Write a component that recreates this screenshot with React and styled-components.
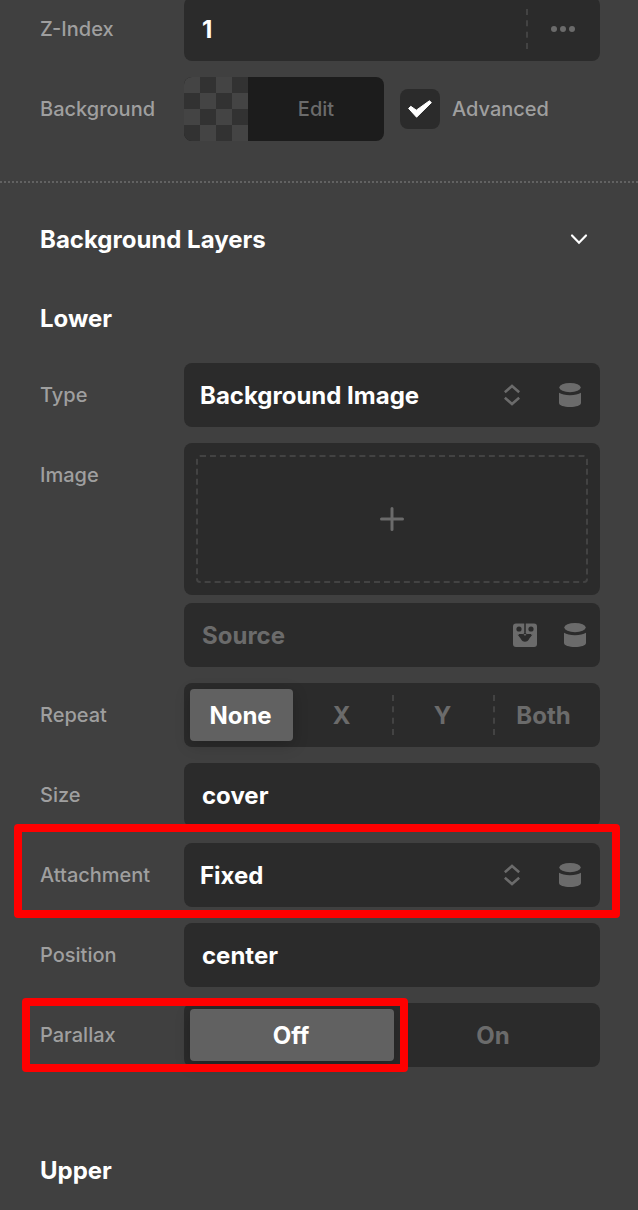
import React, { useState } from 'react';
import styled, { createGlobalStyle, css } from 'styled-components';

const GlobalStyle = createGlobalStyle`
  *, *::before, *::after {
    box-sizing: border-box;
  }

  body {
    margin: 0;
    background: #404040;
    overflow: hidden;
    font-family: Inter, "Liberation Sans", sans-serif;
    color: #fff;
  }

  button, input, select {
    font: inherit;
    color: inherit;
    margin: 0;
    padding: 0;
    border: 0;
    background: none;
  }
`;

const Panel = styled.main`
  display: flex;
  flex-direction: column;
  margin-top: -3px;
`;

const Section = styled.section`
  display: flex;
  flex-direction: column;
  gap: 16px;
  padding: 0 38px 40px 40px;
`;

const Divider = styled.hr`
  width: 100%;
  margin: 0;
  border: 0;
  border-top: 2px dotted #626262;
`;

const SectionHeader = styled.button`
  display: flex;
  align-items: center;
  justify-content: space-between;
  height: 32px;
  margin-top: 40px;
  padding-right: 12px;
  font-size: 24px;
  font-weight: 700;
  text-align: left;
  cursor: pointer;
`;

const Subheading = styled.h3`
  height: 32px;
  margin: ${props => (props.$last ? '72px' : '32px')} 0 12px;
  font-size: 24px;
  font-weight: 700;
  line-height: 32px;
`;

const Row = styled.div`
  position: relative;
  display: grid;
  grid-template-columns: 144px 1fr;
`;

const Label = styled.label`
  height: 64px;
  font-size: 20px;
  font-weight: 500;
  line-height: 64px;
  color: #9f9f9f;
`;

const Field = styled.div`
  display: flex;
  align-items: center;
  min-width: 0;
  height: 64px;
  border-radius: 8px;
  background: #2b2b2b;
`;

const TextInput = styled.input`
  flex: 1;
  min-width: 0;
  height: 100%;
  padding-left: 18px;
  font-size: 24px;
  font-weight: 700;
  outline: none;

  &::placeholder {
    color: #6b6b6b;
    opacity: 1;
  }
`;

const Select = styled.select`
  flex: 1;
  min-width: 0;
  height: 100%;
  padding-left: 16px;
  appearance: none;
  font-size: 24px;
  font-weight: 700;
  outline: none;
`;

const IconButton = styled.button`
  display: flex;
  align-items: center;
  justify-content: center;
  width: 50px;
  height: 64px;
  color: #6b6b6b;
  cursor: pointer;
`;

const FieldIcons = styled.div`
  display: flex;
  align-items: center;
  gap: ${props => props.$gap || '0'};
  padding-right: ${props => props.$end || '0'};
  color: #6b6b6b;
`;

const MoreButton = styled(IconButton)`
  position: relative;
  width: 74px;

  &::before {
    content: '';
    position: absolute;
    left: 0;
    top: 12px;
    height: 40px;
    border-left: 2px dashed #434343;
  }
`;

const BackgroundControl = styled.div`
  display: flex;
  align-items: center;
`;

const ColorEdit = styled.button`
  display: flex;
  width: 200px;
  height: 64px;
  border-radius: 8px;
  overflow: hidden;
  background: #1c1c1c;
  font-size: 20px;
  font-weight: 500;
  color: #6b6b6b;
  cursor: pointer;
`;

const Swatch = styled.span`
  width: 64px;
  height: 64px;
  background: repeating-conic-gradient(#323232 0 25%, #444 0 50%) 0 0 / 32px 32px;
`;

const EditText = styled.span`
  flex: 1;
  line-height: 64px;
  text-align: center;
`;

const CheckLabel = styled.label`
  display: flex;
  align-items: center;
  gap: 12px;
  margin-left: 16px;
  font-size: 20px;
  font-weight: 500;
  color: #9f9f9f;
`;

const CheckBoxWrap = styled.span`
  display: grid;
  place-items: center;
  width: 40px;
  height: 40px;
  border-radius: 8px;
  background: #2b2b2b;
  color: #fff;

  > * {
    grid-area: 1 / 1;
  }

  svg {
    pointer-events: none;
    visibility: hidden;
  }

  input:checked + svg {
    visibility: visible;
  }
`;

const CheckBox = styled.input`
  width: 40px;
  height: 40px;
  appearance: none;
`;

const ImageControl = styled.div`
  display: flex;
  flex-direction: column;
  gap: 8px;
  min-width: 0;
`;

const DropZone = styled.div`
  display: flex;
  height: 152px;
  padding: 12px;
  border-radius: 8px;
  background: #2b2b2b;
`;

const AddImage = styled.button`
  display: flex;
  flex: 1;
  align-items: center;
  justify-content: center;
  border: 2px dashed #434343;
  border-radius: 4px;
  color: #6b6b6b;
  cursor: pointer;
`;

const Segments = styled(Field)`
  padding: 6px;
`;

const SegmentInput = styled.input`
  position: absolute;
  inset: 0;
  width: 100%;
  height: 100%;
  appearance: none;
  cursor: pointer;
`;

const Segment = styled.label`
  position: relative;
  flex: 1 1 0;
  height: 52px;
  font-size: 24px;
  font-weight: 700;
  line-height: 54px;
  text-align: center;
  color: #6b6b6b;

  ${props => props.$divided && css`
    &::before {
      content: '';
      position: absolute;
      left: 0;
      top: 6px;
      height: 40px;
      border-left: 2px dashed #434343;
    }
  `}

  ${props => props.$active && css`
    color: #fff;

    &::before {
      content: '';
      position: absolute;
      inset: 0 -2px 0 0;
      border-radius: 4px;
      background: #616161;
      box-shadow: 0 4px 16px rgba(0, 0, 0, 0.2);
    }
  `}
`;

const SegmentText = styled.span`
  position: relative;
`;

const Highlight = styled.div`
  position: absolute;
  z-index: 1;
  inset: ${props => props.$inset};
  border: 8px solid #f00;
  border-radius: 4px;
  pointer-events: none;
`;

const Database = () => (
  <svg width="22" height="24" viewBox="0 0 22 24" fill="currentColor">
    <ellipse cx="11" cy="4.6" rx="10.7" ry="4.6" />
    <path d="M0 9.8C2.4 11.4 6.3 12.2 11 12.2s8.600-.8 11-2.400V20c0 2.400-4.900 4-11 4S0 22.400 0 20z" />
  </svg>
);

const Sorter = () => (
  <svg width="16" height="22" viewBox="0 0 16 22" fill="none" stroke="currentColor" strokeWidth="2.6">
    <path d="M.8 8.200 8 2l7.200 6.200M.8 13.800 8 20l7.200-6.200" />
  </svg>
);

const Face = () => (
  <svg width="24" height="24" viewBox="0 0 24 24">
    <rect y=".5" width="24" height="23.5" rx="3" fill="currentColor" />
    <path
      d="M11.900 0v9.500q0 2-2 2H6M12.100 0v9.500q0 2 2 2H18"
      fill="none"
      stroke="#2b2b2b"
      strokeWidth="1"
    />
    <g fill="#2b2b2b">
      <circle cx="6" cy="6" r="2.6" />
      <circle cx="18" cy="6" r="2.6" />
      <path d="M4.500 11.800h5.500c1 0 1.500.8 2 .8s1-.8 2-.8h5.500c-1.500 1.400-2.500 2.700-3.700 4.700-.9 1.600-2.200 2.200-3.800 2.200s-2.900-.6-3.800-2.200c-1.200-2-2.200-3.300-3.700-4.700z" />
    </g>
  </svg>
);

const Dots = () => (
  <svg width="24" height="6" viewBox="0 0 24 6" fill="currentColor">
    <circle cx="3" cy="3" r="3" />
    <circle cx="12" cy="3" r="3" />
    <circle cx="21" cy="3" r="3" />
  </svg>
);

const Plus = () => (
  <svg width="24" height="24" viewBox="0 0 24 24" fill="none" stroke="currentColor" strokeWidth="3" strokeLinecap="round">
    <path d="M12 1.500v21M1.500 12h21" />
  </svg>
);

const Chevron = () => (
  <svg width="18" height="12" viewBox="0 0 18 12" fill="none" stroke="#fff" strokeWidth="2.2" strokeLinecap="round">
    <path d="M2 2.500l7 7.200 7-7.200" />
  </svg>
);

const Check = () => (
  <svg width="24" height="18" viewBox="0 0 24 18" fill="#fff" stroke="#fff" strokeLinejoin="round">
    <path d="M2.800 6.300 8.300 10.200 21.400.8 23.400 2.600 8.600 17.200.6 8.400z" />
  </svg>
);

const SelectField = ({ id, options }) => (
  <Field>
    <Select id={id}>
      {options.map(option => <option key={option}>{option}</option>)}
    </Select>
    <FieldIcons $gap="25px" $end="5px">
      <Sorter />
      <IconButton type="button" aria-label="Dynamic data"><Database /></IconButton>
    </FieldIcons>
  </Field>
);

const SegmentedField = ({ name, label, options }) => {
  const [value, setValue] = useState(options[0]);
  const current = options.indexOf(value);

  return (
    <Segments role="radiogroup" aria-label={label}>
      {options.map((option, index) => (
        <Segment
          key={option}
          $active={index === current}
          $divided={index > 0 && index !== current && index !== current + 1}
        >
          <SegmentInput
            type="radio"
            name={name}
            id={`${name}-${index}`}
            checked={index === current}
            onChange={() => setValue(option)}
          />
          <SegmentText>{option}</SegmentText>
        </Segment>
      ))}
    </Segments>
  );
};

const App = () => {
  const [open, setOpen] = useState(true);

  return (
    <Panel>
      <GlobalStyle />
      <Section>
        <Row>
          <Label htmlFor="z-index">Z-Index</Label>
          <Field>
            <TextInput id="z-index" defaultValue="1" />
            <MoreButton type="button" aria-label="More"><Dots /></MoreButton>
          </Field>
        </Row>
        <Row>
          <Label htmlFor="background">Background</Label>
          <BackgroundControl>
            <ColorEdit id="background" type="button">
              <Swatch />
              <EditText>Edit</EditText>
            </ColorEdit>
            <CheckLabel>
              <CheckBoxWrap>
                <CheckBox type="checkbox" defaultChecked />
                <Check />
              </CheckBoxWrap>
              Advanced
            </CheckLabel>
          </BackgroundControl>
        </Row>
      </Section>
      <Divider />
      <Section>
        <SectionHeader type="button" aria-expanded={open} onClick={() => setOpen(!open)}>
          Background Layers
          <Chevron />
        </SectionHeader>
        {open && (
          <>
            <Subheading>Lower</Subheading>
            <Row>
              <Label htmlFor="type">Type</Label>
              <SelectField id="type" options={['Background Image']} />
            </Row>
            <Row>
              <Label htmlFor="source">Image</Label>
              <ImageControl>
                <DropZone>
                  <AddImage type="button" aria-label="Add image"><Plus /></AddImage>
                </DropZone>
                <Field>
                  <TextInput id="source" placeholder="Source" />
                  <FieldIcons>
                    <IconButton type="button" aria-label="Choose graphic"><Face /></IconButton>
                    <IconButton type="button" aria-label="Dynamic data"><Database /></IconButton>
                  </FieldIcons>
                </Field>
              </ImageControl>
            </Row>
            <Row>
              <Label htmlFor="repeat-0">Repeat</Label>
              <SegmentedField name="repeat" label="Repeat" options={['None', 'X', 'Y', 'Both']} />
            </Row>
            <Row>
              <Label htmlFor="size">Size</Label>
              <Field><TextInput id="size" defaultValue="cover" /></Field>
            </Row>
            <Row>
              <Label htmlFor="attachment">Attachment</Label>
              <SelectField id="attachment" options={['Fixed']} />
              <Highlight $inset="-19px -20px -11px -26px" />
            </Row>
            <Row>
              <Label htmlFor="position">Position</Label>
              <Field><TextInput id="position" defaultValue="center" /></Field>
            </Row>
            <Row>
              <Label htmlFor="parallax-0">Parallax</Label>
              <SegmentedField name="parallax" label="Parallax" options={['Off', 'On']} />
              <Highlight $inset="-5px calc((100% - 144px) / 2 - 16px) -5px -18px" />
            </Row>
            <Subheading $last>Upper</Subheading>
          </>
        )}
      </Section>
    </Panel>
  );
};

export default App;
